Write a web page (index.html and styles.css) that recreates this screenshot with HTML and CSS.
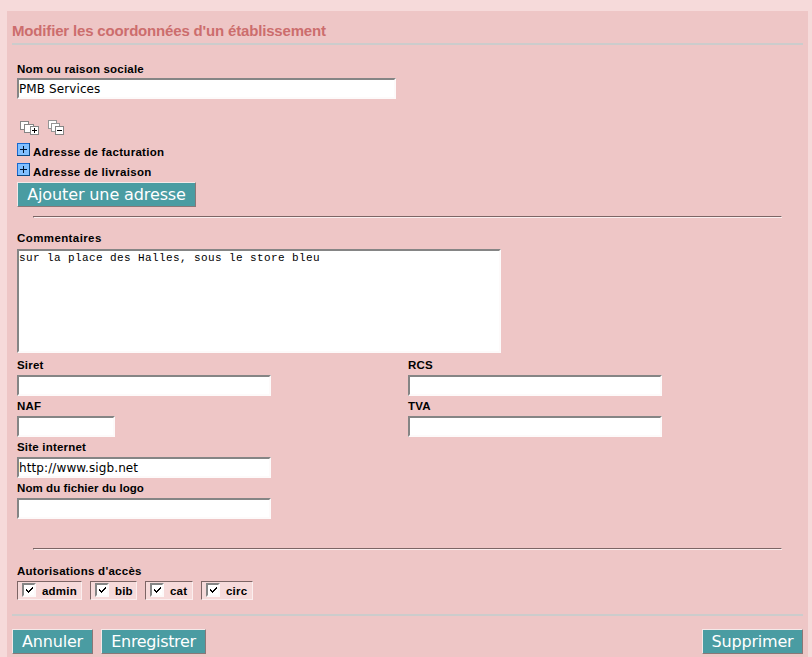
FILE: index.html
```html
<!DOCTYPE html>
<html lang="fr">
<head>
<meta charset="utf-8">
<title>Modifier les coordonnées d'un établissement</title>
<link rel="stylesheet" href="styles.css">
</head>
<body>
<form class="panel">
  <h3 class="title">Modifier les coordonnées d'un établissement</h3>
  <div class="content">
    <div class="field name">
      <label for="nom">Nom ou raison sociale</label>
      <input class="text wide" id="nom" type="text" value="PMB Services">
    </div>
    <div class="tree-tools">
      <svg width="20" height="15" viewBox="0 0 20 15" shape-rendering="crispEdges">
        <path d="M.5 1.500h8v8h-8z" fill="#fff" stroke="#858585"/>
        <path d="M4.500 4.500h9v8h-9z" fill="#fff" stroke="#858585"/>
        <path d="M10.500 6.500h8v8h-8z" fill="#fff" stroke="#858585"/>
        <path d="M12 10.500h5M14.500 8v5" stroke="#000"/>
      </svg>
      <svg width="16" height="15" viewBox="0 0 16 15" shape-rendering="crispEdges">
        <path d="M.5 .5h8v8h-8z" fill="#fff" stroke="#959595"/>
        <path d="M3.500 3.500h8v8h-8z" fill="#fff" stroke="#959595"/>
        <path d="M7.500 6.500h8v8h-8z" fill="#fff" stroke="#858585"/>
        <path d="M9 10.500h5" stroke="#000"/>
      </svg>
    </div>
    <div class="node">
      <svg class="plus" width="13" height="13" viewBox="0 0 13 13" shape-rendering="crispEdges"><path d="M0 0h13v13H0z" fill="#80bfff"/><path d="M0 .5h13M.5 0v13" stroke="#1768cf"/><path d="M12.500 0v13M0 12.500h13" stroke="#084886"/><path d="M3 6.500h7M6.500 3v7" stroke="#001533"/></svg>
      <span>Adresse de facturation</span>
    </div>
    <div class="node">
      <svg class="plus" width="13" height="13" viewBox="0 0 13 13" shape-rendering="crispEdges"><path d="M0 0h13v13H0z" fill="#80bfff"/><path d="M0 .5h13M.5 0v13" stroke="#1768cf"/><path d="M12.500 0v13M0 12.500h13" stroke="#084886"/><path d="M3 6.500h7M6.500 3v7" stroke="#001533"/></svg>
      <span>Adresse de livraison</span>
    </div>
    <button class="button add" type="button">Ajouter une adresse</button>
    <hr>
    <div class="field comments">
      <label for="comment">Commentaires</label>
      <textarea id="comment" spellcheck="false">sur la place des Halles, sous le store bleu</textarea>
    </div>
    <div class="grid">
      <div class="field"><label for="siret">Siret</label><input class="text" id="siret" type="text"></div>
      <div class="field"><label for="rcs">RCS</label><input class="text" id="rcs" type="text"></div>
      <div class="field"><label for="naf">NAF</label><input class="text short" id="naf" type="text"></div>
      <div class="field"><label for="tva">TVA</label><input class="text" id="tva" type="text"></div>
      <div class="field"><label for="site">Site internet</label><input class="text" id="site" type="text" value="http://www.sigb.net"></div>
      <div></div>
      <div class="field logo"><label for="logo">Nom du fichier du logo</label><input class="text" id="logo" type="text"></div>
    </div>
    <hr class="second">
    <div class="access-title">Autorisations d'accès</div>
    <div class="access">
      <label class="user admin"><span class="check"><svg width="7" height="7" viewBox="0 0 7 7" shape-rendering="crispEdges"><path d="M0 3h1v1h1v1h1V4h1V3h1V2h1V1h1v2H6v1H5v1H4v1H3v1H2V6H1V5H0z"/></svg></span>admin</label>
      <label class="user bib"><span class="check"><svg width="7" height="7" viewBox="0 0 7 7" shape-rendering="crispEdges"><path d="M0 3h1v1h1v1h1V4h1V3h1V2h1V1h1v2H6v1H5v1H4v1H3v1H2V6H1V5H0z"/></svg></span>bib</label>
      <label class="user cat"><span class="check"><svg width="7" height="7" viewBox="0 0 7 7" shape-rendering="crispEdges"><path d="M0 3h1v1h1v1h1V4h1V3h1V2h1V1h1v2H6v1H5v1H4v1H3v1H2V6H1V5H0z"/></svg></span>cat</label>
      <label class="user circ"><span class="check"><svg width="7" height="7" viewBox="0 0 7 7" shape-rendering="crispEdges"><path d="M0 3h1v1h1v1h1V4h1V3h1V2h1V1h1v2H6v1H5v1H4v1H3v1H2V6H1V5H0z"/></svg></span>circ</label>
    </div>
  </div>
  <div class="actions">
    <button class="button cancel" type="button">Annuler</button>
    <button class="button save" type="button">Enregistrer</button>
    <button class="button delete" type="button">Supprimer</button>
  </div>
</form>
</body>
</html>
```
FILE: styles.css
```css
* { box-sizing: border-box; }
body {
  margin: 0;
  height: 657px;
  overflow: hidden;
  padding: 11px 4px 0 7px;
  background: #f6dada;
  color: #000;
  font: bold 11.5px/14px "Liberation Sans", Arial, sans-serif;
  letter-spacing: .2px;
}
.panel {
  height: 646px;
  padding: 0 5px;
  background: #eec6c6;
}
.title {
  margin: 0;
  height: 34px;
  padding-top: 11px;
  border-bottom: 2px solid #ccc;
  color: #cc6d6d;
  font-size: 15px;
  line-height: 18px;
  letter-spacing: -.17px;
}
.content {
  height: 569px;
  padding: 17px 5px 0;
}
.field label { display: block; height: 16px; }
.text, textarea {
  display: block;
  margin: 0;
  padding: 0;
  border: 2px solid #fdfafa;
  border-top-color: #858585;
  border-left-color: #858585;
  border-radius: 0;
  background: #fff;
  color: #000;
  outline: 0;
}
.text {
  width: 254px;
  height: 21px;
  font: 12px/17px "DejaVu Sans", sans-serif;
  letter-spacing: .1px;
}
.text.wide { width: 379px; }
.text.short { width: 98px; }
.tree-tools {
  display: flex;
  gap: 8px;
  height: 43px;
  padding: 21px 0 0 3px;
}
.node {
  display: flex;
  gap: 3px;
  height: 20px;
  padding-top: 1px;
  letter-spacing: .31px;
}
.node span { padding-top: 2px; }
.button {
  height: 25px;
  padding: 0;
  border: 1px solid #f3e9e9;
  border-right-color: #8a7777;
  border-bottom-color: #8a7777;
  border-radius: 0;
  background: #4a9ca2;
  color: #fff;
  font: 16px/22px "DejaVu Sans", sans-serif;
  letter-spacing: -.2px;
}
.add { display: block; width: 179px; letter-spacing: -.12px; }
hr {
  width: 749px;
  height: 2px;
  margin: 9px 0 0 16px;
  border: 1px solid #fbeeee;
  border-top-color: #7c6565;
  border-left-color: #7c6565;
}
.comments { margin-top: 13px; }
.comments label { height: 18px; letter-spacing: .4px; }
textarea {
  width: 484px;
  height: 104px;
  resize: none;
  overflow: hidden;
  font: 11px/14px "Liberation Mono", monospace;
  letter-spacing: .4px;
}
.grid {
  display: grid;
  grid-template-columns: 391px 254px;
  grid-auto-rows: 41px;
  padding-top: 5px;
}
.grid .field label { height: 17px; }
.grid .logo label { letter-spacing: .08px; }
.second { margin-top: 26px; }
.access-title { margin-top: 14px; height: 17px; letter-spacing: .27px; }
.access { display: flex; gap: 8px; }
.user {
  display: flex;
  gap: 6px;
  height: 19px;
  padding: 1px 0 0 4px;
  line-height: 16px;
  border: 1px solid #fbeeee;
  border-top-color: #7c6565;
  border-left-color: #7c6565;
  background: #f6dada;
}
.admin { width: 65px; }
.bib { width: 47px; }
.cat { width: 48px; }
.circ { width: 52px; }
.check {
  width: 14px;
  height: 14px;
  padding: 1px 2px;
  border: 2px solid #fdfafa;
  border-top-color: #858585;
  border-left-color: #858585;
  background: #fff;
}
.check svg { display: block; }
.actions {
  display: flex;
  gap: 8px;
  height: 41px;
  padding-top: 13px;
  border-top: 2px solid #ccc;
}
.cancel { width: 81px; }
.save { width: 105px; letter-spacing: -.35px; }
.delete { width: 101px; margin-left: auto; }
```
